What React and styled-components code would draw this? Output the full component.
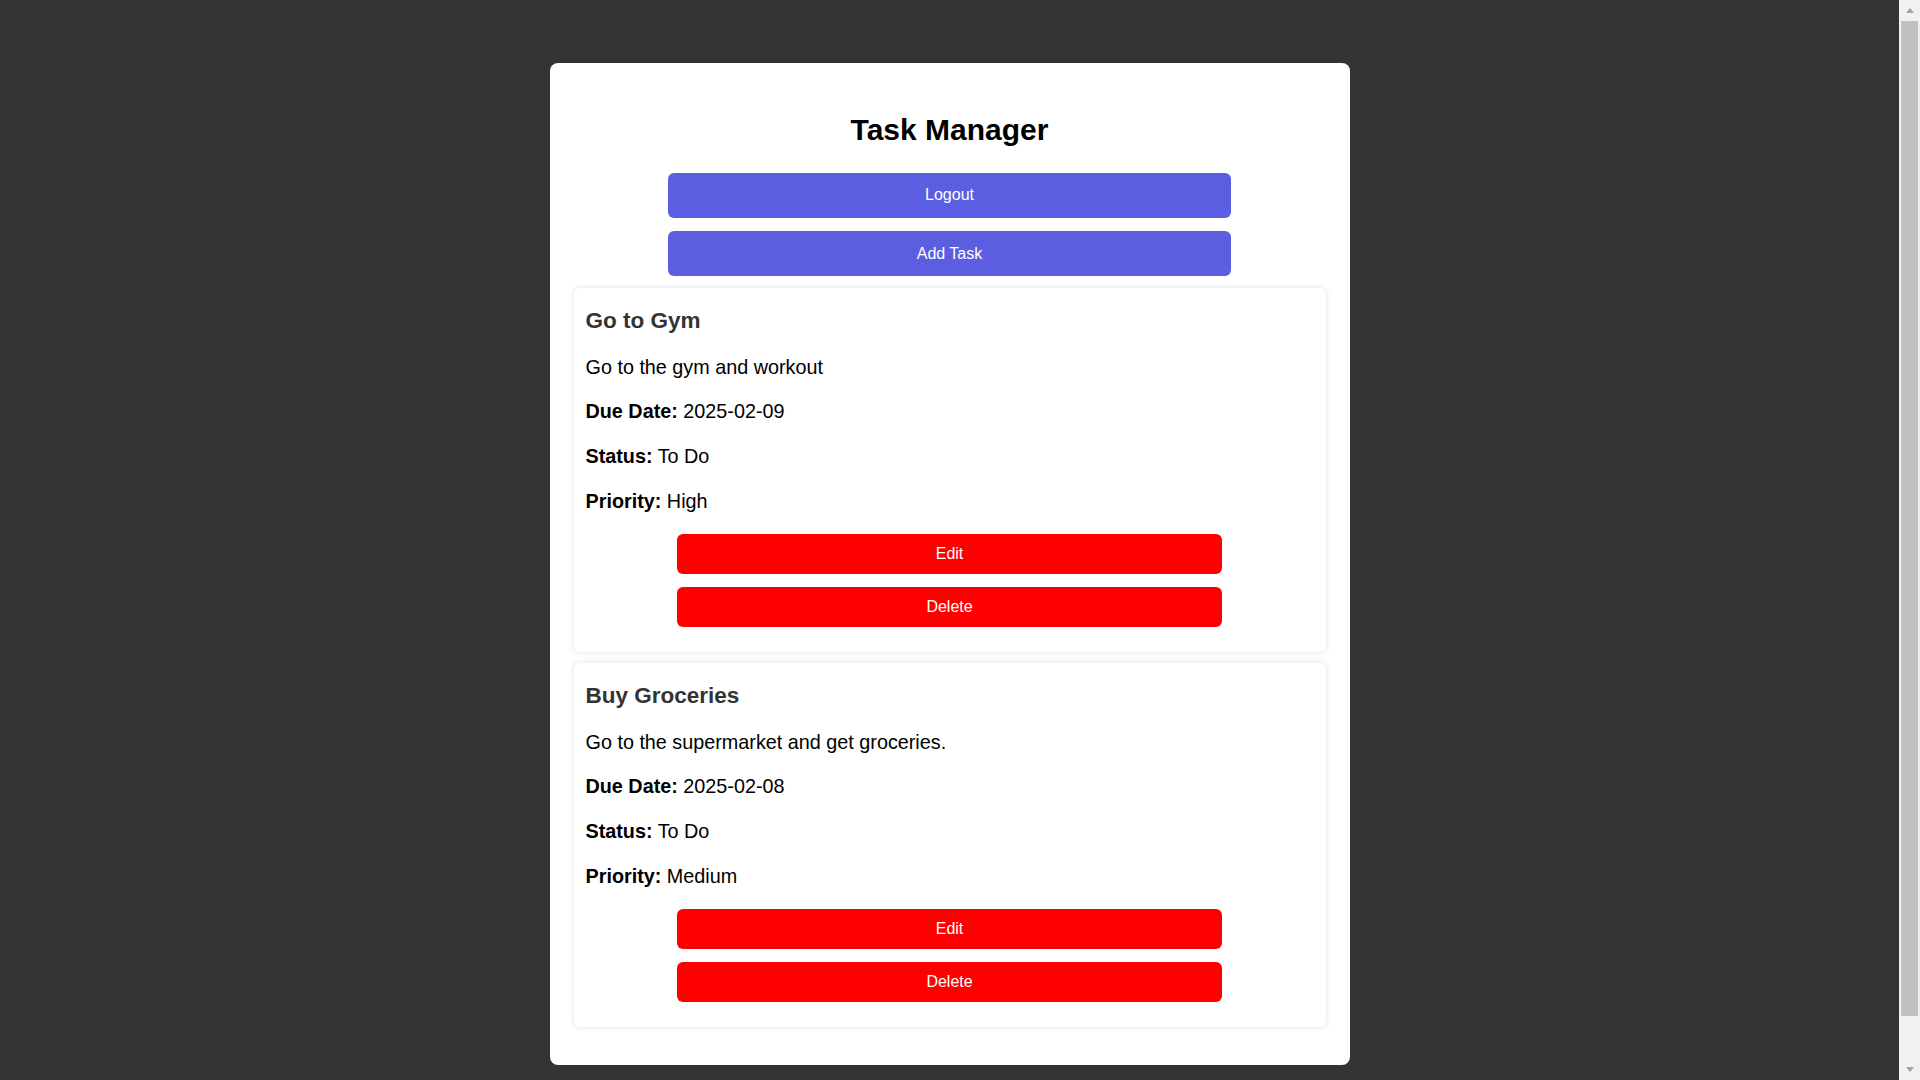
import React from "react";
import styled, { createGlobalStyle } from "styled-components";

const GlobalStyle = createGlobalStyle`
  html, body {
    margin: 0;
    padding: 0;
    background: #333333;
    font-family: "Liberation Sans", Arial, Helvetica, sans-serif;
  }
  * { box-sizing: border-box; }
`;

const Page = styled.div`
  padding: 63px 21px 64px 0;
`;

const Container = styled.main`
  width: 800px;
  margin: 0 auto;
  background: #ffffff;
  border-radius: 8px;
  padding: 24px 24px 24px;
  display: flex;
  flex-direction: column;
`;

const Title = styled.h2`
  margin: 25.5px 0 25.8px;
  font-size: 30px;
  line-height: 34.5px;
  font-weight: 700;
  color: #000000;
  text-align: center;
`;

const Actions = styled.div`
  display: flex;
  flex-direction: column;
  align-items: center;
  gap: 13.3px;
`;

const Button = styled.button`
  display: flex;
  align-items: center;
  justify-content: center;
  width: ${(p) => (p.$variant === "danger" ? "545px" : "563px")};
  height: ${(p) => (p.$variant === "danger" ? "40px" : "45px")};
  padding: 0;
  border: none;
  border-radius: 6px;
  background: ${(p) => (p.$variant === "danger" ? "#ff0000" : "#5c5ee2")};
  color: #ffffff;
  font-family: "Liberation Sans", Arial, Helvetica, sans-serif;
  font-size: 16px;
  font-weight: 400;
  cursor: pointer;
`;

const TaskList = styled.div`
  display: flex;
  flex-direction: column;
  gap: 11px;
  margin: 11.8px 0 14.2px;
`;

const Card = styled.section`
  background: #ffffff;
  border-radius: 6px;
  box-shadow: 0 0 6px rgba(0, 0, 0, 0.13);
  padding: 20.5px 12px 25px;
  display: flex;
  flex-direction: column;
`;

const CardTitle = styled.h3`
  margin: 0 0 21.5px;
  font-size: 22.5px;
  line-height: 25.7px;
  font-weight: 700;
  color: #333333;
`;

const Field = styled.p`
  margin: 0 0 ${(p) => (p.$last ? "21.2px" : "22px")};
  font-size: 19.8px;
  line-height: 22.8px;
  color: #000000;
`;

const Label = styled.strong`
  font-weight: 700;
`;

const CardButtons = styled.div`
  display: flex;
  flex-direction: column;
  align-items: center;
  gap: 13px;
`;

const ScrollTrack = styled.div`
  position: fixed;
  top: 0;
  right: 0;
  width: 21px;
  height: 100vh;
  background: #f1f1f1;
  display: flex;
  flex-direction: column;
  align-items: center;
  padding: 0 2px;
`;

const ScrollArrow = styled.div`
  flex: 0 0 21px;
  width: 100%;
  display: flex;
  align-items: center;
  justify-content: center;
  &::before {
    content: "";
    width: 0;
    height: 0;
    border-left: 4.5px solid transparent;
    border-right: 4.5px solid transparent;
    ${(p) =>
      p.$down
        ? "border-top: 5px solid #a3a3a3;"
        : "border-bottom: 5px solid #a3a3a3;"}
  }
`;

const ScrollThumb = styled.div`
  width: 100%;
  height: 995px;
  background: #c1c1c1;
`;

const ScrollSpacer = styled.div`
  flex: 1;
`;

const tasks = [
  {
    title: "Go to Gym",
    description: "Go to the gym and workout",
    dueDate: "2025-02-09",
    status: "To Do",
    priority: "High",
  },
  {
    title: "Buy Groceries",
    description: "Go to the supermarket and get groceries.",
    dueDate: "2025-02-08",
    status: "To Do",
    priority: "Medium",
  },
];

function TaskCard({ task }) {
  return (
    <Card>
      <CardTitle>{task.title}</CardTitle>
      <Field>{task.description}</Field>
      <Field>
        <Label>Due Date:</Label> {task.dueDate}
      </Field>
      <Field>
        <Label>Status:</Label> {task.status}
      </Field>
      <Field $last>
        <Label>Priority:</Label> {task.priority}
      </Field>
      <CardButtons>
        <Button $variant="danger">Edit</Button>
        <Button $variant="danger">Delete</Button>
      </CardButtons>
    </Card>
  );
}

export default function App() {
  return (
    <>
      <GlobalStyle />
      <Page>
        <Container>
          <Title>Task Manager</Title>
          <Actions>
            <Button>Logout</Button>
            <Button>Add Task</Button>
          </Actions>
          <TaskList>
            {tasks.map((t) => (
              <TaskCard key={t.title} task={t} />
            ))}
          </TaskList>
        </Container>
      </Page>
      <ScrollTrack aria-hidden="true">
        <ScrollArrow />
        <ScrollThumb />
        <ScrollSpacer />
        <ScrollArrow $down />
      </ScrollTrack>
    </>
  );
}
